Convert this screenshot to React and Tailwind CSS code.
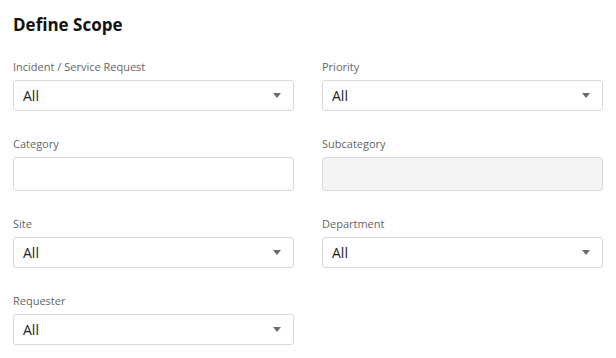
import { useState } from "react"

function Caret() {
  return (
    <svg width="8" height="5" viewBox="0 0 8 5" className="shrink-0">
      <path d="M0 0 H8 L4 5 Z" fill="#6b6b6b" />
    </svg>
  )
}

function SelectField({ label, value }) {
  return (
    <div>
      <div className="text-[11px] leading-[16px] text-[#666666] mb-[5px]">{label}</div>
      <div className="h-[31px] border border-[#d9d9d9] rounded-[3px] bg-white flex items-center justify-between pl-[9px] pr-[12px]">
        <span className="text-[14px] text-[#222222]">{value}</span>
        <Caret />
      </div>
    </div>
  )
}

function TextField({ label, disabled }) {
  const [text, setText] = useState("")
  return (
    <div>
      <div className="text-[11px] leading-[16px] text-[#666666] mb-[5px]">{label}</div>
      <input
        type="text"
        value={text}
        disabled={disabled}
        onChange={(e) => setText(e.target.value)}
        className={
          "block w-full h-[34px] border border-[#d9d9d9] rounded-[3px] px-[9px] text-[14px] outline-none " +
          (disabled ? "bg-[#f4f4f4]" : "bg-white")
        }
      />
    </div>
  )
}

export default function App() {
  return (
    <div className="w-[616px] h-[358px] bg-white px-[13px] pt-[13px] font-['Open_Sans',sans-serif]">
      <h1 className="text-[17px] leading-[24px] font-bold text-[#111111] mb-[22px]">Define Scope</h1>

      <div className="grid grid-cols-2 gap-x-[28px] gap-y-[25px]">
        <SelectField label="Incident / Service Request" value="All" />
        <SelectField label="Priority" value="All" />

        <TextField label="Category" />
        <TextField label="Subcategory" disabled />

        <SelectField label="Site" value="All" />
        <SelectField label="Department" value="All" />

        <SelectField label="Requester" value="All" />
      </div>
    </div>
  )
}
